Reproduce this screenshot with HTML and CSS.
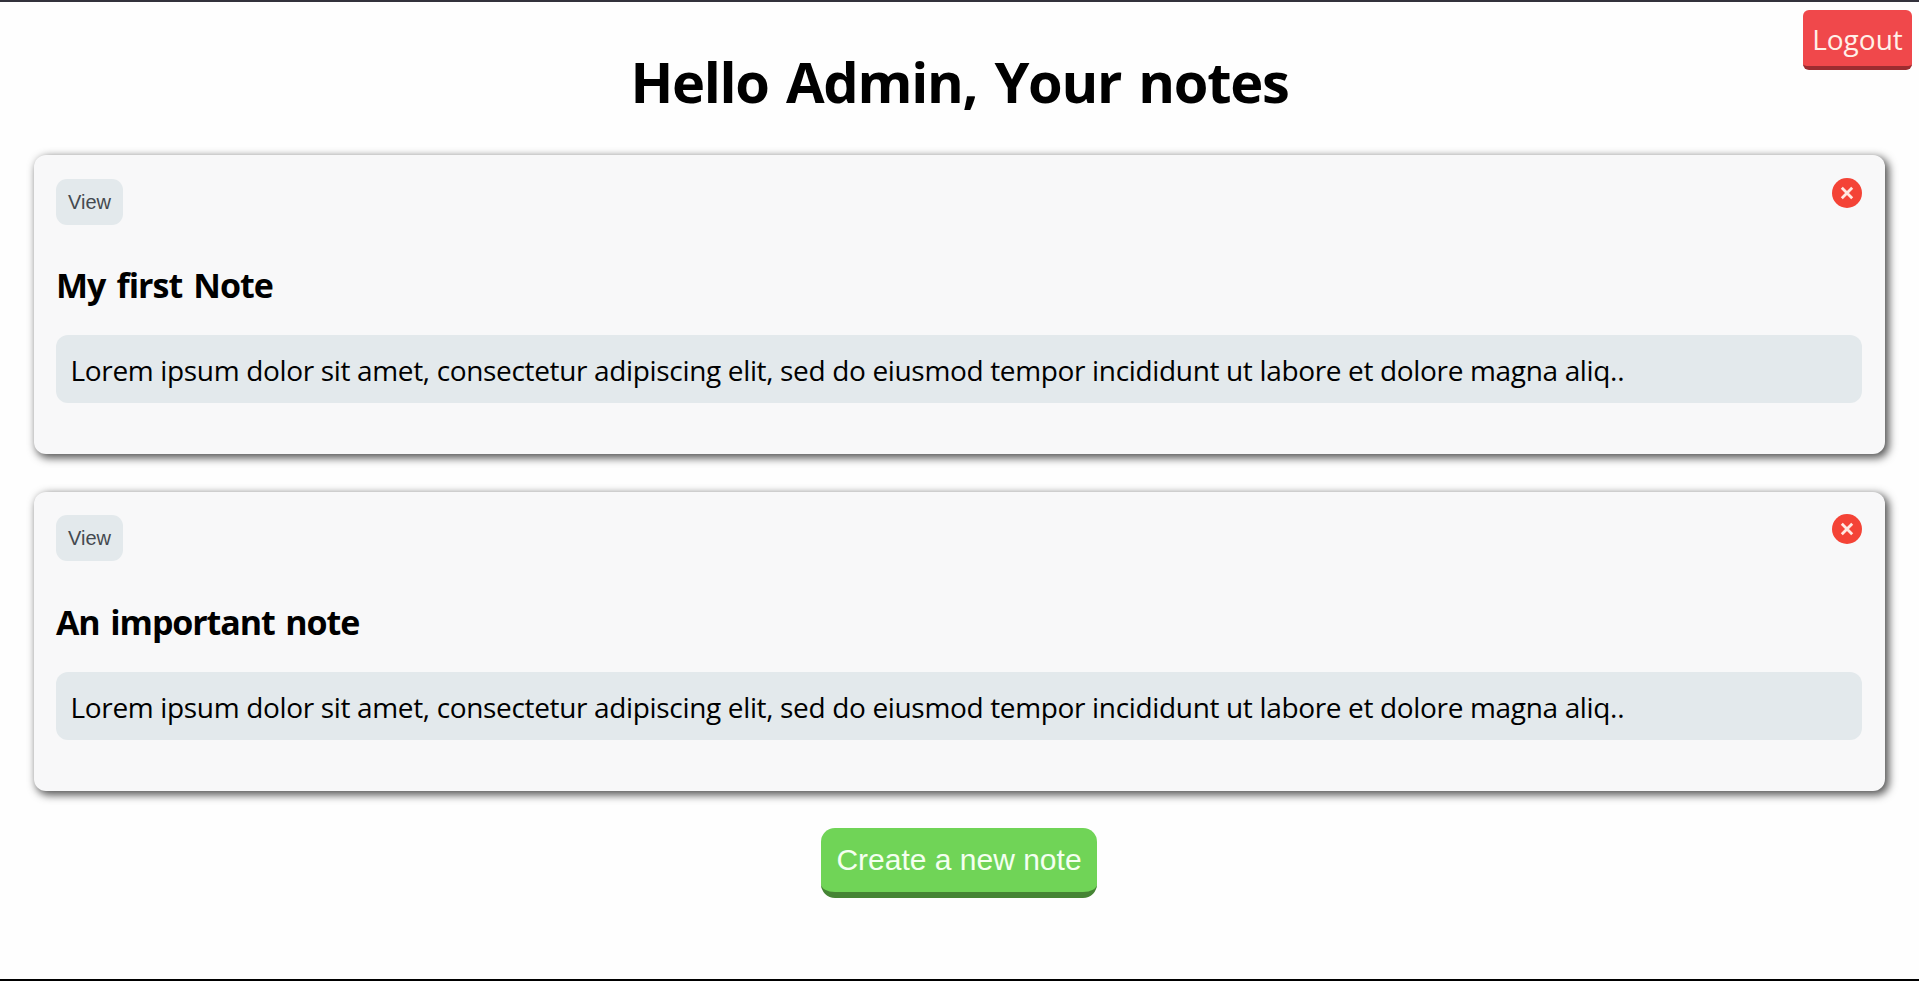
FILE: index.html
```html
<!DOCTYPE html>
<html lang="en">
<head>
<meta charset="utf-8">
<title>Notes</title>
<link rel="stylesheet" href="styles.css">
</head>
<body>
<header class="header">
  <h1 class="title">Hello Admin, Your notes</h1>
  <button class="logout">Logout</button>
</header>
<main class="notes">
  <article class="note">
    <div class="note-bar">
      <button class="view">View</button>
      <svg class="remove" viewBox="0 0 30 30" role="img" aria-label="Delete"><circle cx="15" cy="15" r="15" fill="#f44336"/><path d="M9.8 9.8 20.2 20.2M20.2 9.8 9.8 20.2" stroke="#ffe9e2" stroke-width="2.8"/></svg>
    </div>
    <h2 class="note-title">My first Note</h2>
    <p class="note-text">Lorem ipsum dolor sit amet, consectetur adipiscing elit, sed do eiusmod tempor incididunt ut labore et dolore magna aliq..</p>
  </article>
  <article class="note note-important">
    <div class="note-bar">
      <button class="view">View</button>
      <svg class="remove" viewBox="0 0 30 30" role="img" aria-label="Delete"><circle cx="15" cy="15" r="15" fill="#f44336"/><path d="M9.8 9.8 20.2 20.2M20.2 9.8 9.8 20.2" stroke="#ffe9e2" stroke-width="2.8"/></svg>
    </div>
    <h2 class="note-title">An important note</h2>
    <p class="note-text">Lorem ipsum dolor sit amet, consectetur adipiscing elit, sed do eiusmod tempor incididunt ut labore et dolore magna aliq..</p>
  </article>
  <button class="create">Create a new note</button>
</main>
</body>
</html>
```
FILE: styles.css
```css
* {
  box-sizing: border-box;
}

body {
  margin: 0;
  height: 981px;
  overflow: hidden;
  background: #fefefe;
  border-top: 2px solid #33323c;
  border-bottom: 2px solid #000;
  font-family: "Open Sans", "Noto Sans", sans-serif;
  color: #000;
}

button {
  border: 0;
  padding: 0;
  font-family: "Liberation Sans", Arial, sans-serif;
}

.header {
  position: relative;
  height: 153px;
  padding-top: 39px;
}

.title {
  margin: 0;
  text-align: center;
  font-size: 56px;
  line-height: 80px;
  letter-spacing: -1.29px;
  word-spacing: 4px;
  white-space: nowrap;
}

.logout {
  position: absolute;
  top: 8px;
  right: 7px;
  width: 109px;
  height: 60px;
  padding-top: 2px;
  border-bottom: 4px solid #9c2c30;
  border-radius: 6px;
  background: #f0484b;
  color: #fff0e8;
  font-family: inherit;
  font-size: 28px;
}

.notes {
  display: flex;
  flex-direction: column;
  gap: 38px;
  padding: 0 34px;
}

.note {
  height: 299px;
  padding: 23px 23px 0 22px;
  border-radius: 12px;
  background: #f8f8f9;
  box-shadow: 3px 3px 8px 1px #555;
}

.note-bar {
  display: flex;
  justify-content: space-between;
  align-items: flex-start;
  height: 48px;
}

.note-important {
  padding-top: 22px;
}

.note-important .note-bar {
  height: 49px;
}

.view {
  width: 67px;
  height: 46px;
  margin-top: 1px;
  border-radius: 11px;
  background: #e3e9ec;
  color: #454950;
  font-size: 20px;
}

.remove {
  width: 30px;
  height: 30px;
}

.note-title {
  margin: 34px 0 25px;
  font-size: 34px;
  line-height: 50px;
  letter-spacing: -0.94px;
  word-spacing: 3px;
}

.note-important .note-title {
  letter-spacing: -1.1px;
}

.note-text {
  height: 68px;
  margin: 0;
  padding-left: 14.5px;
  border-radius: 12px;
  background: #e3e9ec;
  font-size: 28px;
  line-height: 70px;
  letter-spacing: -0.34px;
  white-space: nowrap;
}

.create {
  align-self: center;
  width: 276px;
  height: 70px;
  margin: -1px 1px 0 0;
  border-bottom: 6px solid #458434;
  border-radius: 14px;
  background: #70d457;
  color: #f4fff0;
  font-size: 30px;
}
```
